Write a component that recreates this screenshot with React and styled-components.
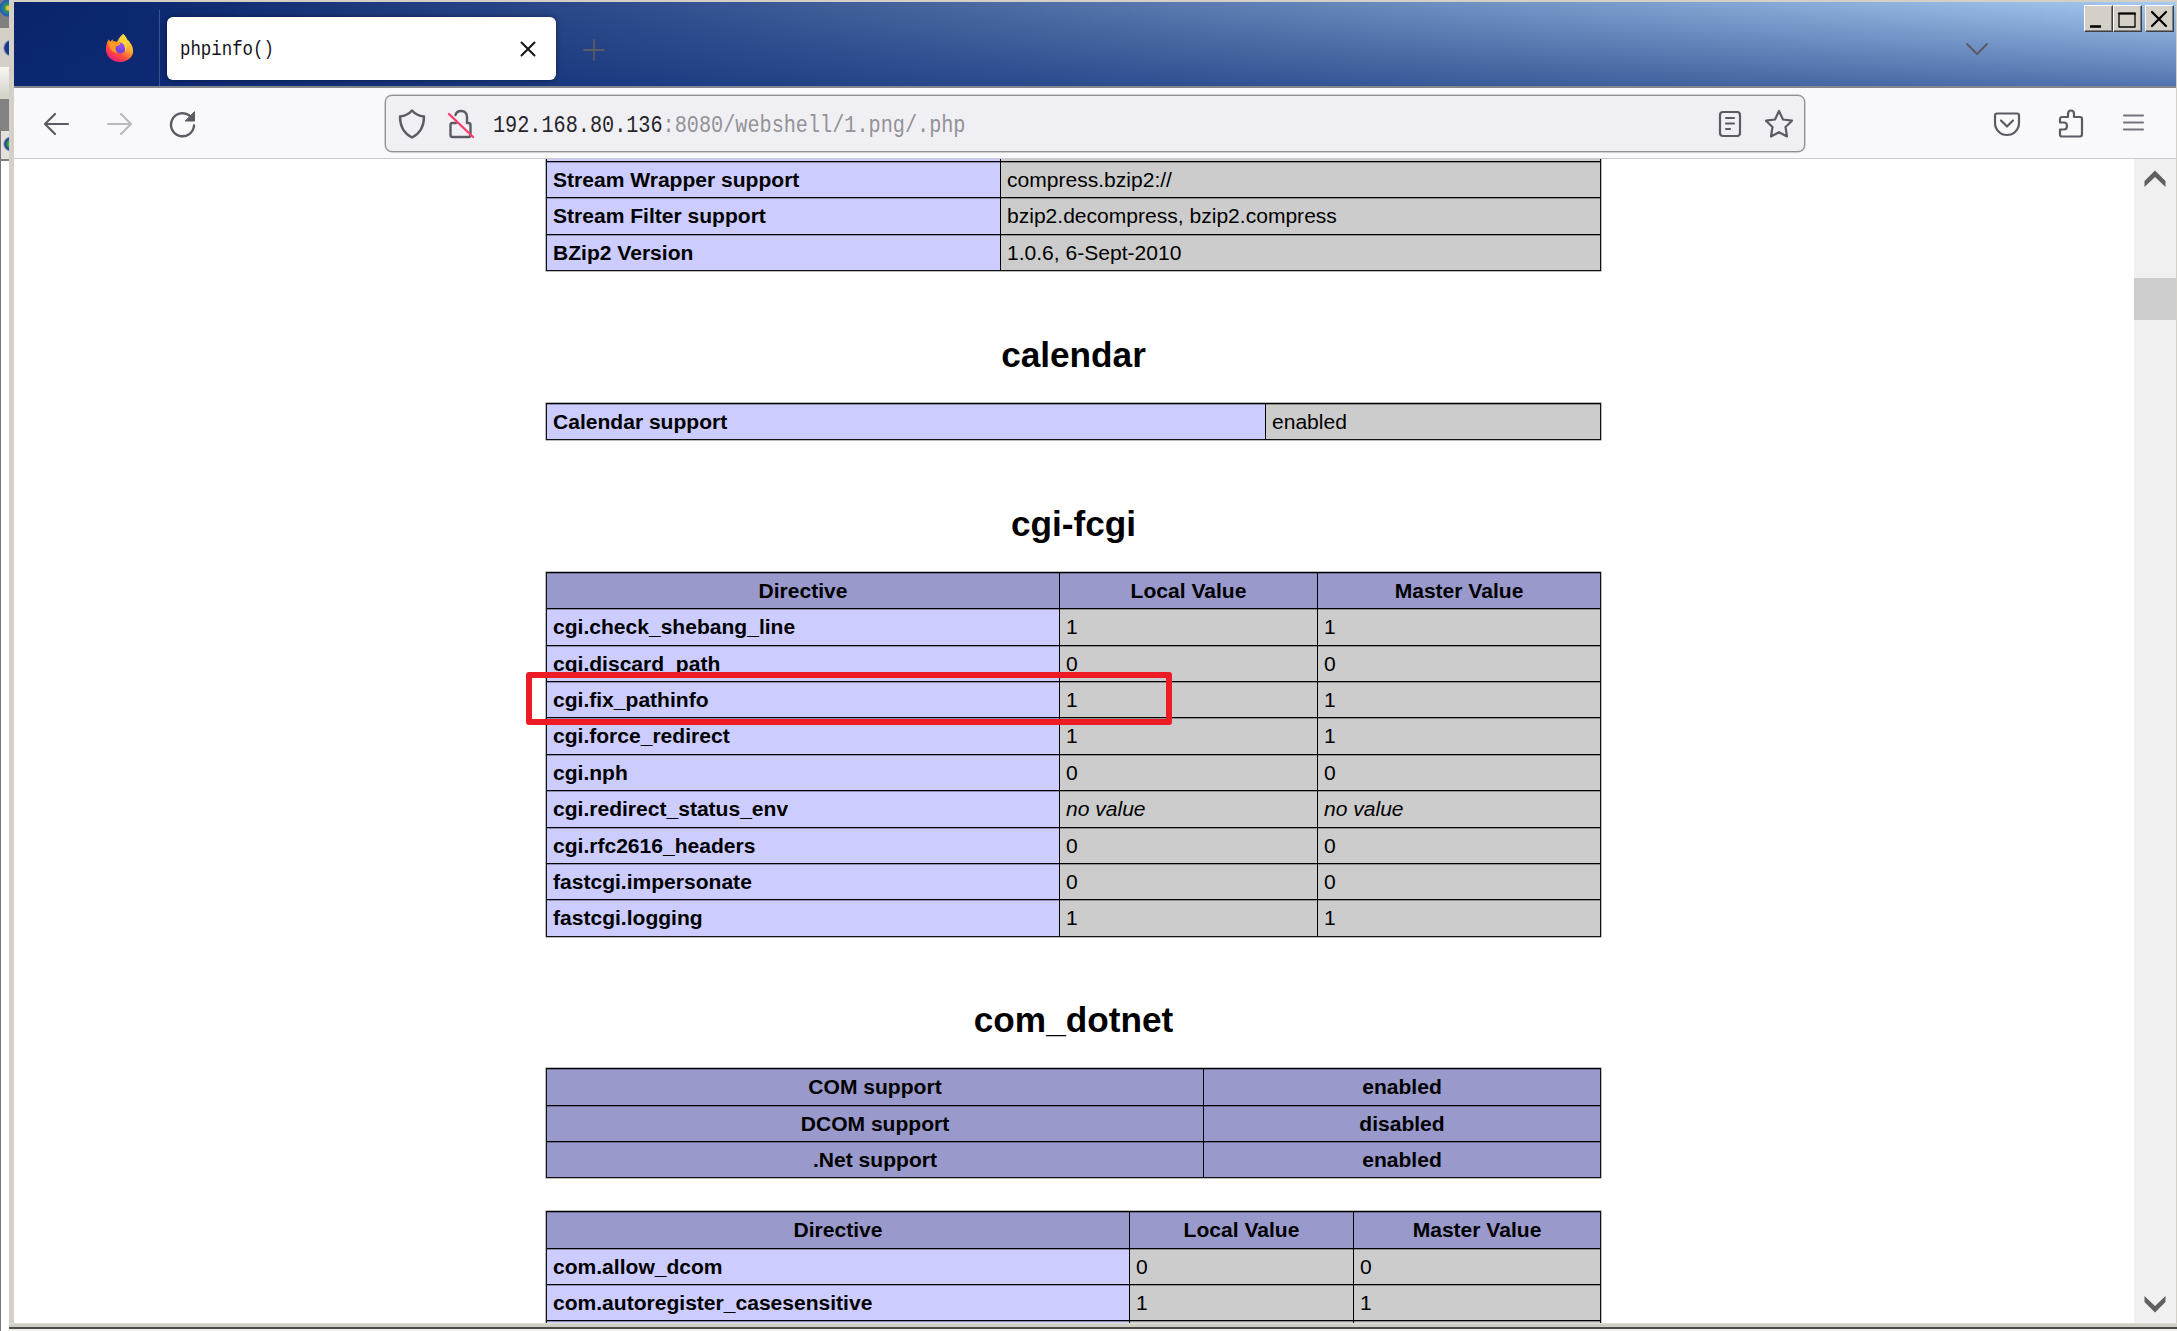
import React from "react";
import styled, { createGlobalStyle } from "styled-components";

const Global = createGlobalStyle`
  * { box-sizing: border-box; }
  html, body { margin: 0; background: #fff; overflow: hidden; }
`;

const Desktop = styled.div`
  width: 2177px; height: 1331px; display: flex; overflow: hidden; background: #fff;
  font-family: "Liberation Sans", Arial, sans-serif;
`;
const Behind = styled.div`
  width: 9px; flex: none; display: flex; flex-direction: column; overflow: hidden;
`;
const Strip = styled.div`
  height: ${p => p.$h}px; flex: none; background: ${p => p.$bg};
  border-left: ${p => (p.$edge ? "1px solid #777" : "0")};
`;
const Column = styled.div`flex: 1; display: flex; flex-direction: column; min-width: 0;`;
const Window = styled.div`
  height: 1329px; display: flex; flex-direction: column; background: #f9f9fb;
  border-style: solid; border-width: 2px 1px 5px 5px;
  border-color: #d4d0c8;
  border-bottom: 0;
`;
const FrameBottom = styled.div`
  height: 6px; flex: none; margin-left: -5px; margin-right: -1px; background: #d0cdc4; border-top: 1px solid #dedcd6;
  border-bottom: 2px solid #4b4b4b;
`;
const Below = styled.div`height: 2px; background: #f0efec;`;

const TitleBar = styled.div`
  height: 86px; flex: none; display: flex; align-items: flex-start; position: relative;
  background:
    linear-gradient(180deg, rgba(12,42,118,0) 0%, rgba(12,42,118,.54) 100%),
    linear-gradient(90deg, #0a246a 0%, #0c286e 6%, #a6caf0 100%);
  border-bottom: 2px solid #85868c;
`;
const LogoSlot = styled.div`width: 145px; height: 84px; padding: 31px 0 0 91px;`;
const Divider = styled.div`width: 1px; height: 76px; margin-top: 8px; background: #3d5289;`;
const Tab = styled.div`
  margin: 15px 0 0 7px; width: 389px; height: 63px; border-radius: 6px; background: #fff;
  box-shadow: 0 0 5px rgba(0,0,0,.45); display: flex; align-items: center;
  justify-content: space-between; padding: 0 20px 0 13px;
`;
const TabTitle = styled.span`
  font: 17.4px "Liberation Mono", monospace; color: #15141a; transform: scaleY(1.18); margin-top: 2px;
`;
const TabTools = styled.div`display: flex; flex: 1; justify-content: space-between; padding: 37px 188px 0 27px;`;
const Controls = styled.div`
  position: absolute; right: 2px; top: 3px; display: flex;
`;
const ControlButton = styled.div`
  width: 29px; height: 27px; margin-left: ${p => p.$gap || 0}px; background: #d4d0c8;
  border: 1px solid; border-color: #fff #404040 #404040 #fff; box-shadow: inset -1px -1px 0 #808080;
`;

const Toolbar = styled.div`
  height: 71px; flex: none; display: flex; align-items: center; background: #f9f9fb;
  border-bottom: 1.5px solid #ccccce; padding-left: 26px;
`;
const NavGroup = styled.div`display: flex; gap: 31px; width: 345px; padding-top: 2px;`;
const UrlBar = styled.div`
  width: 1420px; height: 57px; border: 1px solid #8f8f93; border-radius: 7px; background: #f0f0f4;
  display: flex; align-items: center; padding: 1px 9px 0 10px; box-shadow: 0 0 0 .5px #a5a5a9;
`;
const LockSlot = styled.div`margin-left: 17px; height: 32px;`;
const UrlText = styled.div`
  flex: 1; margin-left: 16px; margin-top: 3px; white-space: pre; color: #929298;
  font: 20.2px "Liberation Mono", monospace; transform: scaleY(1.18);
`;
const Host = styled.span`color: #26252b;`;
const UrlActions = styled.div`display: flex; gap: 17px;`;
const MenuGroup = styled.div`display: flex; margin-left: 186px; gap: 32px; padding-top: 1px;`;

const Viewport = styled.div`flex: 1; min-height: 0; display: flex; background: #fff;`;
const Page = styled.div`
  flex: 1; height: 1164px; overflow: hidden; position: relative; color: #000; padding-left: 532px;
`;
const Table = styled.div`
  width: 1055px; margin-top: ${p => p.$mt}px; border: 1px solid #111; border-top: 0;
  box-shadow: 0 0 0 .5px #777;
`;
const Row = styled.div`
  display: grid; grid-template-columns: ${p => p.$cols}; height: 36.38px;
  border-top: 1px solid #000;
`;
const Cell = styled.div`
  background: ${p => (p.$kind === "h" ? "#9999cc" : p.$kind === "e" ? "#ccccff" : "#cccccc")};
  font-weight: ${p => (p.$kind === "v" ? 400 : 700)};
  text-align: ${p => (p.$kind === "h" ? "center" : "left")};
  font-style: ${p => (p.$italic ? "italic" : "normal")};
  font-size: 21.05px; line-height: 36px; padding: 0 6px; white-space: nowrap; overflow: hidden;
  box-shadow: inset 0 1px 0 rgba(0,0,0,.3);
  & + & { border-left: 1px solid #000; }
`;
const Heading = styled.h2`
  width: 1055px; margin: ${p => p.$mt}px 0 0; height: 44px; line-height: 44px;
  text-align: center; font-size: 35.2px; font-weight: 700;
`;
const Highlight = styled.div`
  position: absolute; left: 512px; top: 513px; width: 646px; height: 53px;
  border: 6px solid #ed1c24; border-radius: 3px;
`;
const ScrollBar = styled.div`
  width: 42px; flex: none; background: #f0f0f0; display: flex; flex-direction: column;
`;
const ScrollArrow = styled.div`height: 40px; padding: ${p => p.$pt}px 0 0 10px;`;
const Thumb = styled.div`height: 42px; margin: 79px 0 auto; background: #cdcdcd;`;

const Icon = ({ w = 28, h = 28, box = "0 0 28 28", c = "#5b5b66", s = 2.2, children }) => (
  <svg width={w} height={h} viewBox={box} fill="none" stroke={c} strokeWidth={s}
    strokeLinecap="round" strokeLinejoin="round" display="block">{children}</svg>
);

const Firefox = () => (
  <svg width="29" height="29" viewBox="0 0 32 32" display="block">
    <defs>
      <linearGradient id="fx" x1=".85" y1=".05" x2=".25" y2="1">
        <stop offset="0" stopColor="#fff44f" /><stop offset=".4" stopColor="#ffa92e" />
        <stop offset=".7" stopColor="#ff4a3f" /><stop offset="1" stopColor="#e31587" />
      </linearGradient>
      <radialGradient id="globe" cx=".6" cy=".2" r=".9">
        <stop offset="0" stopColor="#a44bf5" /><stop offset="1" stopColor="#5b3fd6" />
      </radialGradient>
    </defs>
    <path fill="url(#fx)" d="M20 1c3 2 4 5 5 7 1 0 2 1 2 2 3 3 4 7 4 10 0 7-7 12-15 12S1 26 1 18c0-4 1-7 3-11l2 3 2-3 1 2 4 1c2-3 3-6 7-9z" />
    <circle cx="17" cy="16.500" r="6" fill="url(#globe)" />
    <path fill="#ff9a1f" d="M4 10l6-1 7 2c0 3-3 3-5 4-1 3 0 5 2 7-6 0-9-4-10-12z" />
    <path fill="#ffd43a" d="M20 1c3 3 4 6 4 9 1 5 0 8-2 11 1-6-1-9-5-11-1-2 0-6 3-9z" />
  </svg>
);

const cells = (kinds, rows) => rows.map(r => ({ kinds, r }));
const sections = [
  { mt: -34.5, cols: "453px 1fr", rows: cells("ev", [
    ["", ""], ["Stream Wrapper support", "compress.bzip2://"],
    ["Stream Filter support", "bzip2.decompress, bzip2.compress"], ["BZip2 Version", "1.0.6, 6-Sept-2010"]]) },
  { title: "calendar", hmt: 61.5, mt: 26.500, cols: "718px 1fr", rows: cells("ev", [["Calendar support", "enabled"]]) },
  { title: "cgi-fcgi", hmt: 61.5, mt: 26, cols: "512px 258px 1fr", rows: [
    ...cells("hhh", [["Directive", "Local Value", "Master Value"]]),
    ...cells("evv", [
      ["cgi.check_shebang_line", "1", "1"], ["cgi.discard_path", "0", "0"], ["cgi.fix_pathinfo", "1", "1"],
      ["cgi.force_redirect", "1", "1"], ["cgi.nph", "0", "0"], ["cgi.redirect_status_env", "no value", "no value"],
      ["cgi.rfc2616_headers", "0", "0"], ["fastcgi.impersonate", "0", "0"], ["fastcgi.logging", "1", "1"]])] },
  { title: "com_dotnet", hmt: 61, mt: 26.500, cols: "656px 1fr", rows: cells("hh", [
    ["COM support", "enabled"], ["DCOM support", "disabled"], [".Net support", "enabled"]]) },
  { mt: 33, cols: "582px 224px 1fr", rows: [
    ...cells("hhh", [["Directive", "Local Value", "Master Value"]]),
    ...cells("evv", [["com.allow_dcom", "0", "0"], ["com.autoregister_casesensitive", "1", "1"], ["", "", ""]])] },
];

export default function App() {
  return (
    <Desktop>
      <Global />
      <Behind>
        <Strip $h={28} $bg="radial-gradient(circle at 8px 8px, #e3c21c 0 2px, #2c9c52 3px, #2459c5 8px, #808080 9px)" />
        <Strip $h={39} $bg="radial-gradient(circle at 12px 20px, #163c92 0 7px, #d4d0c8 9px)" />
        <Strip $h={32} $bg="linear-gradient(#f7f6f4,#d4d0c8)" />
        <Strip $h={32} $bg="#828282" />
        <Strip $h={28} $bg="radial-gradient(circle at 10px 13px, #36b53a 0 3px, #1b3c91 6px, #e5e2dc 8px)" $edge />
        <Strip $h={2} $bg="#808080" />
        <Strip $h={1170} $bg="#fff" $edge />
      </Behind>
      <Column>
        <Window>
          <TitleBar>
            <LogoSlot><Firefox /></LogoSlot>
            <Divider />
            <Tab>
              <TabTitle>phpinfo()</TabTitle>
              <Icon w={16} h={16} box="0 0 16 16" c="#15141a" s={2}><path d="M1.500 1.500l13 13M14.500 1.500l-13 13" /></Icon>
            </Tab>
            <TabTools>
              <Icon w={22} h={22} box="0 0 22 22" c="#5b5b66" s={1.800}><path d="M11 1v20M1 11h20" /></Icon>
              <Icon w={22} h={22} box="0 0 22 22" c="#5b5b66" s={2}><path d="M1 5l10 10L21 5" /></Icon>
            </TabTools>
            <Controls>
              <ControlButton><Icon w={27} h={25} box="0 0 27 25" c="#000" s={2.500}><path d="M5 20.500h11" strokeLinecap="butt" /></Icon></ControlButton>
              <ControlButton><Icon w={27} h={25} box="0 0 27 25" c="#000" s={1.300}><path d="M5 7.500h16V21H5z" /><path d="M5 7.500h16" strokeWidth="2.200" /></Icon></ControlButton>
              <ControlButton $gap={3}><Icon w={27} h={25} box="0 0 27 25" c="#000" s={2.200}><path d="M6 6l14 14M20 6l-14 14" /></Icon></ControlButton>
            </Controls>
          </TitleBar>
          <Toolbar>
            <NavGroup>
              <Icon w={32} h={28} box="0 0 32 28"><path d="M5 14h23M15 4L5 14l10 10" /></Icon>
              <Icon w={32} h={28} box="0 0 32 28" c="#b9b9c0"><path d="M5 14h23M18 4l10 10-10 10" /></Icon>
              <Icon w={32} h={28} box="0 0 32 28" s={2.400}>
                <path d="M28 15.500a11.500 11.500 0 1 1-4-9.500" /><path d="M28.500 2v9h-9z" fill="#5b5b66" strokeWidth="1" />
              </Icon>
            </NavGroup>
            <UrlBar>
              <Icon w={32} h={32} box="0 0 32 32" s={2.400}><path d="M16 2.500C13 6 8 8 4 8.500c0 10 4 17 12 21 8-4 12-11 12-21C24 8 19 6 16 2.500z" /></Icon>
              <LockSlot>
                <Icon w={32} h={32} box="0 0 32 32" s={2.400}>
                  <path d="M11 15H7.500q-2 0-2 2v10q0 2 2 2h16q2 0 2-2V17q0-2-2-2h-1M22 15V9q0-6-6-6-4.500 0-5.500 4" />
                  <path d="M4 6l24 23" stroke="#ff3b6b" />
                </Icon>
              </LockSlot>
              <UrlText><Host>192.168.80.136</Host>:8080/webshell/1.png/.php</UrlText>
              <UrlActions>
                <Icon w={32} h={32} box="0 0 32 32"><rect x="6" y="4" width="20" height="24" rx="3" /><path d="M12 10h8M12 15.500h8M12 21h4" /></Icon>
                <Icon w={32} h={32} box="0 0 32 32"><path d="M16 3l4 8.500 9 1.200-6.500 6.300 1.500 9.500-8-4.300-8 4.300 1.500-9.500L3 12.700l9-1.200z" /></Icon>
              </UrlActions>
            </UrlBar>
            <MenuGroup>
              <Icon w={32} h={32} box="0 0 32 32"><path d="M6 5.500h20q2 0 2 2V15a12 12 0 0 1-24 0V7.500q0-2 2-2z" /><path d="M10 12.500l6 6 6-6" /></Icon>
              <Icon w={32} h={32} box="0 0 32 32"><path d="M13 9V6q0-3.500 3-3.500T19 6v3h6q2 0 2 2v15q0 2.500-2 2.500H7q-2 0-2-2v-5h4q3 0 3-3.500t-3-3.500H5v-3Q5 9 7 9z" /></Icon>
              <Icon w={32} h={32} box="0 0 32 32" c="#75757f"><path d="M5 7.500h19M5 14.500h19M5 21.500h19" /></Icon>
            </MenuGroup>
          </Toolbar>
          <Viewport>
            <Page>
              {sections.map((sec, i) => (
                <React.Fragment key={i}>
                  {sec.title && <Heading $mt={sec.hmt}>{sec.title}</Heading>}
                  <Table $mt={sec.mt}>
                    {sec.rows.map(({ kinds, r }, j) => (
                      <Row key={j} $cols={sec.cols}>
                        {r.map((t, k) => <Cell key={k} $kind={kinds[k]} $italic={t === "no value"}>{t}</Cell>)}
                      </Row>
                    ))}
                  </Table>
                </React.Fragment>
              ))}
              <Highlight />
            </Page>
            <ScrollBar>
              <ScrollArrow $pt={10}><Icon w={22} h={20} box="0 0 22 20" s={0} c="none"><path d="M11 1.500L21.500 12v6L11 8 .5 18v-6z" fill="#606060" /></Icon></ScrollArrow>
              <Thumb />
              <ScrollArrow $pt={11}><Icon w={22} h={20} box="0 0 22 20" s={0} c="none"><path d="M11 18.500L21.500 8V2L11 12 .5 2v6z" fill="#606060" /></Icon></ScrollArrow>
            </ScrollBar>
          </Viewport>
          <FrameBottom />
        </Window>
        <Below />
      </Column>
    </Desktop>
  );
}
